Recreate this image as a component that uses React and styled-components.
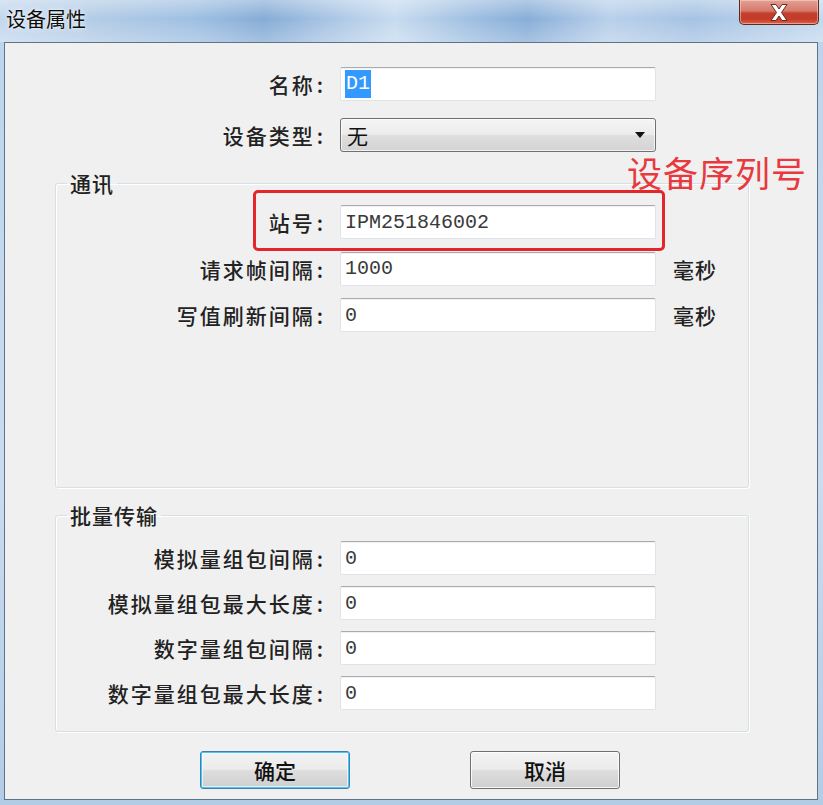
import React from "react";
import styled, { createGlobalStyle } from "styled-components";

const GlobalStyle = createGlobalStyle`
  html, body { margin: 0; padding: 0; }
  body {
    width: 823px;
    height: 805px;
    overflow: hidden;
    font-family: "Noto Sans CJK SC", "Noto Sans", sans-serif;
  }
`;

const Window = styled.div`
  width: 823px;
  height: 805px;
  display: flex;
  flex-direction: column;
  box-sizing: border-box;
  background: linear-gradient(to bottom, #bcd4ec 0%, #c9dcf0 60%, #b3cce6 100%);
`;

const TitleBar = styled.div`
  height: 42px;
  flex: none;
  display: flex;
  align-items: flex-start;
  justify-content: space-between;
  padding-left: 6px;
  background:
    linear-gradient(to bottom, rgba(255,255,255,0.35) 0%, rgba(255,255,255,0) 45%, rgba(255,255,255,0.25) 100%),
    linear-gradient(to right, #c3d8ee 0%, #b2cbe6 12%, #9ebfe2 24%, #86acd6 32%, #a9c5e4 40%, #c7dbef 48%, #9cbde0 58%, #88aed8 64%, #b9d0ea 74%, #a6c3e4 84%, #c4d9ee 100%);
`;

const Title = styled.div`
  margin-top: 6px;
  font-size: 20px;
  line-height: 26px;
  color: #0d0d0d;
  text-shadow: 0 0 6px rgba(255,255,255,0.9), 0 0 2px rgba(255,255,255,0.9);
`;

const CloseButton = styled.div`
  width: 80px;
  height: 25px;
  margin-right: 4px;
  box-sizing: border-box;
  border: 1px solid #5c2a22;
  border-top: none;
  border-radius: 0 0 5px 5px;
  background: linear-gradient(to bottom, #e3a195 0%, #d67a6b 45%, #c33f2d 55%, #c53a28 80%, #d8654c 100%);
  box-shadow: inset 0 0 0 1px rgba(255,220,210,0.5);
  display: flex;
  align-items: center;
  justify-content: center;
`;

const Client = styled.div`
  flex: 1;
  margin: 0 5px 5px 4px;
  background: #f0f0f0;
  border: 1px solid #5f7388;
  position: relative;
  display: flex;
  flex-direction: column;
`;

const TopForm = styled.div`
  padding-top: 24px;
  display: flex;
  flex-direction: column;
  gap: 17px;
`;

const Row = styled.div`
  display: grid;
  grid-template-columns: ${(p) => p.$labelW}px 316px auto;
  column-gap: 17px;
  align-items: center;
  height: 34px;
`;

const Label = styled.div`
  text-align: right;
  font-size: 21px;
  font-weight: 500;
  letter-spacing: 2px;
  color: #222;
  white-space: nowrap;
`;

const Colon = styled.span`
  margin-left: 2px;
  letter-spacing: 0;
`;

const Field = styled.div`
  height: 34px;
  box-sizing: border-box;
  background: #fff;
  border: 1px solid #e0e3ea;
  border-top-color: #a9abb1;
  border-radius: 2px;
  box-shadow: inset 0 1px 1px rgba(0,0,0,0.06);
  padding-left: 4px;
  display: flex;
  align-items: center;
  font-family: "Liberation Mono", monospace;
  font-size: 20px;
  color: #3a3a3a;
`;

const Selected = styled.span`
  background: #3399ff;
  color: #fff;
  padding: 1px 1px;
  line-height: 26px;
`;

const Select = styled.div`
  height: 34px;
  box-sizing: border-box;
  border: 1px solid #707070;
  border-radius: 3px;
  background: linear-gradient(to bottom, #f4f4f4 0%, #ececec 48%, #dedede 52%, #d3d3d3 100%);
  box-shadow: inset 0 0 0 1px rgba(255,255,255,0.7);
  display: flex;
  align-items: center;
  justify-content: space-between;
  padding: 0 10px 0 6px;
  font-size: 21px;
  color: #111;
`;

const Arrow = styled.div`
  width: 0;
  height: 0;
  border-left: 5px solid transparent;
  border-right: 5px solid transparent;
  border-top: 6px solid #111;
`;

const Unit = styled.div`
  font-size: 21px;
  font-weight: 500;
  letter-spacing: 1px;
  color: #222;
`;

const Group = styled.fieldset`
  margin: ${(p) => p.$top}px 0 0 50px;
  width: 694px;
  height: ${(p) => p.$h}px;
  min-width: 0;
  box-sizing: border-box;
  padding: ${(p) => p.$padTop}px 0 0 0;
  border: 1px solid #d5dfe5;
  border-radius: 3px;
  box-shadow: inset 1px 1px 0 #fff, 1px 1px 0 #fff;
  display: flex;
  flex-direction: column;
`;

const Legend = styled.legend`
  margin-left: 11px;
  padding: 0 3px;
  font-size: 21px;
  line-height: 24px;
  font-weight: 500;
  letter-spacing: 1px;
  color: #222;
`;

const GroupRows = styled.div`
  display: flex;
  flex-direction: column;
  gap: ${(p) => p.$gap}px;
`;

const ButtonBar = styled.div`
  margin-top: 19px;
  padding-left: 195px;
  display: flex;
  gap: 120px;
`;

const Button = styled.div`
  width: 150px;
  height: 38px;
  box-sizing: border-box;
  border: 1px solid ${(p) => (p.$default ? "#3c7fb1" : "#707070")};
  border-radius: 3px;
  background: linear-gradient(to bottom, #f3f3f3 0%, #ebebeb 48%, #dddddd 52%, #cfcfcf 100%);
  box-shadow: ${(p) =>
    p.$default
      ? "inset 0 0 0 1px #48c8f5, inset 0 0 0 2px rgba(255,255,255,0.6)"
      : "inset 0 0 0 1px rgba(255,255,255,0.8)"};
  display: flex;
  align-items: center;
  justify-content: center;
  font-size: 21px;
  font-weight: 500;
  color: #111;
`;

const Highlight = styled.div`
  position: absolute;
  left: 248px;
  top: 147px;
  width: 412px;
  height: 61px;
  box-sizing: border-box;
  border: 3px solid #e3262c;
  border-radius: 5px;
  pointer-events: none;
`;

const Annotation = styled.div`
  position: absolute;
  left: 622px;
  top: 109px;
  font-size: 35px;
  line-height: 40px;
  letter-spacing: 1px;
  color: #e8393e;
  white-space: nowrap;
`;

const FormRow = ({ labelW, label, children, unit }) => (
  <Row $labelW={labelW}>
    <Label>
      {label}
      <Colon>:</Colon>
    </Label>
    {children}
    {unit ? <Unit>{unit}</Unit> : <span />}
  </Row>
);

export default function App() {
  return (
    <>
      <GlobalStyle />
      <Window>
        <TitleBar>
          <Title>设备属性</Title>
          <CloseButton>
            <svg width="22" height="19" viewBox="0 0 22 19">
              <path
                d="M3 1.5 H8 L11 6 L14 1.5 H19 L13.5 9.5 L19 17.5 H14 L11 13 L8 17.5 H3 L8.5 9.5 Z"
                fill="#ffffff"
                stroke="#6b2a20"
                strokeWidth="1"
                strokeLinejoin="round"
              />
            </svg>
          </CloseButton>
        </TitleBar>
        <Client>
          <TopForm>
            <FormRow labelW={318} label="名称">
              <Field>
                <Selected>D1</Selected>
              </Field>
            </FormRow>
            <FormRow labelW={318} label="设备类型">
              <Select>
                <span>无</span>
                <Arrow />
              </Select>
            </FormRow>
          </TopForm>

          <Group $top={19} $h={317} $padTop={10}>
            <Legend>通讯</Legend>
            <GroupRows $gap={12.5}>
              <FormRow labelW={267} label="站号">
                <Field>IPM251846002</Field>
              </FormRow>
              <FormRow labelW={267} label="请求帧间隔" unit="毫秒">
                <Field>1000</Field>
              </FormRow>
              <FormRow labelW={267} label="写值刷新间隔" unit="毫秒">
                <Field>0</Field>
              </FormRow>
            </GroupRows>
          </Group>

          <Group $top={15} $h={229} $padTop={14}>
            <Legend>批量传输</Legend>
            <GroupRows $gap={11}>
              <FormRow labelW={267} label="模拟量组包间隔">
                <Field>0</Field>
              </FormRow>
              <FormRow labelW={267} label="模拟量组包最大长度">
                <Field>0</Field>
              </FormRow>
              <FormRow labelW={267} label="数字量组包间隔">
                <Field>0</Field>
              </FormRow>
              <FormRow labelW={267} label="数字量组包最大长度">
                <Field>0</Field>
              </FormRow>
            </GroupRows>
          </Group>

          <ButtonBar>
            <Button $default>确定</Button>
            <Button>取消</Button>
          </ButtonBar>

          <Highlight />
          <Annotation>设备序列号</Annotation>
        </Client>
      </Window>
    </>
  );
}
